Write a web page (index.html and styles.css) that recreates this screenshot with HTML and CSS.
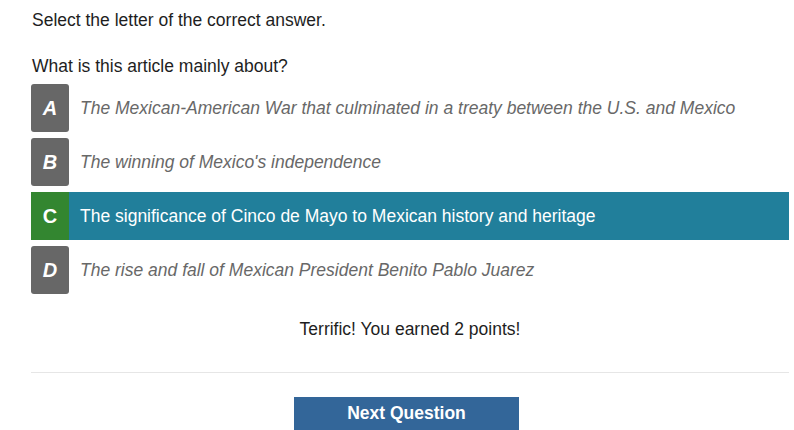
FILE: index.html
```html
<!DOCTYPE html>
<html>
<head>
<meta charset="utf-8">
<link rel="stylesheet" href="styles.css">
</head>
<body>
<div class="page">
  <p class="instr">Select the letter of the correct answer.</p>
  <p class="question">What is this article mainly about?</p>
  <div class="options">
    <div class="option">
      <span class="letter">A</span>
      <span class="text">The Mexican-American War that culminated in a treaty between the U.S. and Mexico</span>
    </div>
    <div class="option">
      <span class="letter">B</span>
      <span class="text">The winning of Mexico's independence</span>
    </div>
    <div class="option selected">
      <span class="letter">C</span>
      <span class="text">The significance of Cinco de Mayo to Mexican history and heritage</span>
    </div>
    <div class="option">
      <span class="letter">D</span>
      <span class="text">The rise and fall of Mexican President Benito Pablo Juarez</span>
    </div>
  </div>
  <p class="feedback">Terrific! You earned 2 points!</p>
  <hr class="divider">
  <div class="actions">
    <button class="next">Next Question</button>
  </div>
</div>
</body>
</html>
```
FILE: styles.css
```css
html, body {
  margin: 0;
  padding: 0;
  background: #ffffff;
}
body {
  font-family: "Liberation Sans", Arial, sans-serif;
  font-size: 17.5px;
  color: #1e1e1e;
  overflow: hidden;
}
.page {
  width: 758px;
  margin-left: 31px;
  padding-top: 10px;
}
.instr {
  margin: 0;
  line-height: 20px;
  padding-left: 1px;
}
.question {
  margin: 26px 0 0 0;
  line-height: 20px;
  padding-left: 1px;
}
.options {
  margin-top: 8px;
  display: flex;
  flex-direction: column;
  gap: 6px;
}
.option {
  display: flex;
  align-items: center;
  height: 48px;
}
.letter {
  width: 38px;
  height: 48px;
  flex: none;
  display: flex;
  align-items: center;
  justify-content: center;
  background: #676767;
  color: #ffffff;
  border-radius: 3px;
  font-weight: bold;
  font-style: italic;
  font-size: 20px;
}
.text {
  padding-left: 11px;
  font-style: italic;
  color: #686868;
}
.option.selected {
  background: #217f9b;
}
.option.selected .letter {
  background: #338630;
  border-radius: 0;
  font-style: normal;
}
.option.selected .text {
  color: #ffffff;
  font-style: normal;
}
.feedback {
  margin: 25px 0 0 0;
  text-align: center;
  line-height: 20px;
}
.divider {
  margin: 33px 0 0 0;
  border: 0;
  border-top: 1px solid #e6e6e6;
  height: 0;
}
.actions {
  display: flex;
  justify-content: center;
  padding-right: 7px;
  margin-top: 24px;
}
.next {
  width: 225px;
  padding: 6px 0 12px 0;
  border: 0;
  background: #336699;
  color: #ffffff;
  font-family: "Liberation Sans", Arial, sans-serif;
  font-weight: bold;
  font-size: 17.5px;
  line-height: 20px;
}
```
